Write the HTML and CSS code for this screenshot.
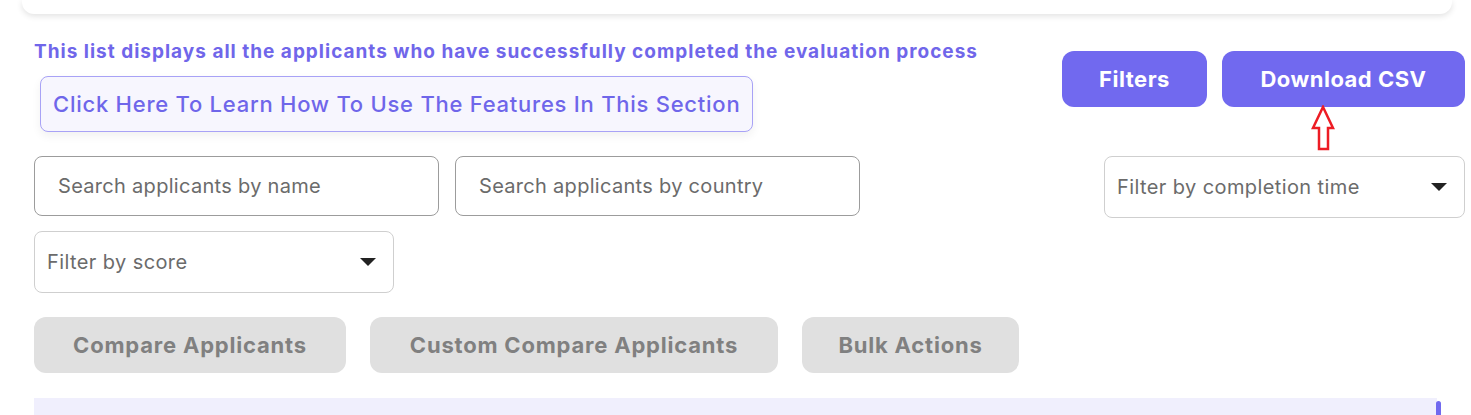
FILE: index.html
```html
<!DOCTYPE html>
<html lang="en">
<head>
    <meta charset="UTF-8">
    <meta name="viewport" content="width=device-width, initial-scale=1.0">
    <title>Evaluated Applicants</title>
    <link rel="stylesheet" href="styles.css">
</head>
<body>
    <div class="top-card"></div>

    <div class="page">
        <!-- Intro + actions -->
        <div class="header-row">
            <div class="intro">
                <p class="intro-text">This list displays all the applicants who have successfully completed the evaluation process</p>
                <button class="learn-btn">Click Here To Learn How To Use The Features In This Section</button>
            </div>
            <div class="actions">
                <button class="btn btn-primary btn-filters">Filters</button>
                <div class="csv-wrap">
                    <button class="btn btn-primary btn-csv">Download CSV</button>
                    <svg class="red-arrow" width="26" height="46" viewBox="0 0 26 46">
                        <polygon points="13,2 23,23 18,23 18,44 9,44 9,23 3,23" fill="#fff" stroke="#ed1c24" stroke-width="2.5"/>
                    </svg>
                </div>
            </div>
        </div>

        <!-- Search & filters -->
        <div class="search-row">
            <input class="field" type="text" placeholder="Search applicants by name">
            <input class="field" type="text" placeholder="Search applicants by country">
            <div class="select select-time">
                <span>Filter by completion time</span>
                <span class="caret"></span>
            </div>
        </div>
        <div class="select select-score">
            <span>Filter by score</span>
            <span class="caret"></span>
        </div>

        <!-- Bulk tools -->
        <div class="tool-row">
            <button class="btn btn-muted btn-compare">Compare Applicants</button>
            <button class="btn btn-muted btn-custom">Custom Compare Applicants</button>
            <button class="btn btn-muted btn-bulk">Bulk Actions</button>
        </div>

        <div class="table-head">
            <span class="scroll-mark"></span>
        </div>
    </div>
</body>
</html>
```

FILE: styles.css
```css
body {
    margin: 0;
    padding: 0;
    background: #fff;
    font-family: 'Inter', 'Noto Sans', sans-serif;
    overflow: hidden;
}
.top-card {
    margin-left: 22px;
    width: 1430px;
    height: 14px;
    background: #fff;
    border-radius: 0 0 12px 12px;
    box-shadow: 0px 2px 6px rgba(0, 0, 0, 0.12);
}
.page {
    padding: 0 6px 0 34px;
}
.header-row {
    display: flex;
    justify-content: space-between;
    align-items: flex-start;
    margin-top: 26px;
}
.intro-text {
    margin: 0;
    font-size: 19px;
    line-height: 24px;
    font-weight: 700;
    letter-spacing: 1px;
    color: #7066ea;
}
.learn-btn {
    margin: 12px 0 0 6px;
    height: 56px;
    padding: 0 12px;
    background: #f7f6fe;
    border: 1px solid #a8a2f6;
    border-radius: 8px;
    font-family: inherit;
    font-size: 22px;
    font-weight: 500;
    letter-spacing: 0.75px;
    color: #6f66ea;
    box-shadow: 0px 4px 10px rgba(0, 0, 0, 0.06);
}
.actions {
    display: flex;
    gap: 15px;
    margin-top: 11px;
}
.btn {
    height: 56px;
    border: none;
    border-radius: 12px;
    font-family: inherit;
    font-size: 22px;
    font-weight: 700;
    letter-spacing: 0.5px;
    cursor: pointer;
}
.btn-primary {
    background: #7169ef;
    color: #fff;
}
.btn-filters {
    width: 145px;
}
.btn-csv {
    width: 243px;
}
.csv-wrap {
    position: relative;
}
.red-arrow {
    position: absolute;
    left: 88px;
    top: 54px;
}
.search-row {
    display: flex;
    gap: 16px;
    margin-top: 24px;
    align-items: flex-start;
}
.field {
    box-sizing: border-box;
    width: 405px;
    height: 60px;
    padding: 0 23px;
    border: 1px solid #9c9c9c;
    border-radius: 8px;
    font-family: inherit;
    font-size: 20px;
    letter-spacing: 0.3px;
    color: #333;
}
.field::placeholder {
    color: #6b6b6b;
}
.select {
    box-sizing: border-box;
    display: flex;
    align-items: center;
    justify-content: space-between;
    height: 62px;
    padding: 0 17px 0 12px;
    border: 1px solid #cfcfcf;
    border-radius: 8px;
    font-size: 20px;
    letter-spacing: 0.4px;
    color: #6b6b6b;
}
.select-time {
    width: 361px;
    margin-left: auto;
}
.select-score {
    width: 360px;
    margin-top: 13px;
}
.caret {
    width: 0;
    height: 0;
    border-left: 8px solid transparent;
    border-right: 8px solid transparent;
    border-top: 8px solid #222;
}
.tool-row {
    display: flex;
    gap: 24px;
    margin-top: 24px;
}
.btn-muted {
    background: #e0e0e0;
    color: #808080;
    letter-spacing: 0.8px;
}
.btn-compare {
    width: 312px;
}
.btn-custom {
    width: 408px;
}
.btn-bulk {
    width: 217px;
}
.table-head {
    position: relative;
    margin-top: 25px;
    width: 1403px;
    height: 20px;
    background: #f0effd;
}
.scroll-mark {
    position: absolute;
    right: -4px;
    top: 3px;
    width: 5px;
    height: 20px;
    border-radius: 3px 3px 0 0;
    background: #7169ef;
}
```
